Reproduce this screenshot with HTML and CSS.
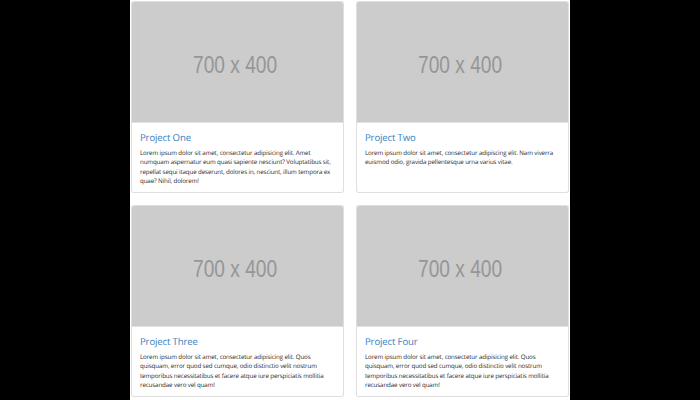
FILE: index.html
```html
<!DOCTYPE html>
<html>
<head>
<meta charset="utf-8">
<link rel="stylesheet" href="styles.css">
</head>
<body>
<div class="page">
  <div class="grid">
    <div class="card">
      <svg class="card-img" viewBox="0 0 700 400"><rect width="700" height="400" fill="#cccccc"/><text x="342" y="235" text-anchor="middle" textLength="279" lengthAdjust="spacingAndGlyphs" class="ph">700 x 400</text></svg>
      <div class="card-body">
        <h4 class="card-title">Project One</h4>
        <p class="card-text">Lorem ipsum dolor sit amet, consectetur adipisicing elit. Amet numquam aspernatur eum quasi sapiente nesciunt? Voluptatibus sit, repellat sequi itaque deserunt, dolores in, nesciunt, illum tempora ex quae? Nihil, dolorem!</p>
      </div>
    </div>
    <div class="card">
      <svg class="card-img" viewBox="0 0 700 400"><rect width="700" height="400" fill="#cccccc"/><text x="342" y="235" text-anchor="middle" textLength="279" lengthAdjust="spacingAndGlyphs" class="ph">700 x 400</text></svg>
      <div class="card-body">
        <h4 class="card-title">Project Two</h4>
        <p class="card-text">Lorem ipsum dolor sit amet, consectetur adipiscing elit. Nam viverra euismod odio, gravida pellentesque urna varius vitae.</p>
      </div>
    </div>
    <div class="card">
      <svg class="card-img" viewBox="0 0 700 400"><rect width="700" height="400" fill="#cccccc"/><text x="342" y="235" text-anchor="middle" textLength="279" lengthAdjust="spacingAndGlyphs" class="ph">700 x 400</text></svg>
      <div class="card-body">
        <h4 class="card-title">Project Three</h4>
        <p class="card-text">Lorem ipsum dolor sit amet, consectetur adipisicing elit. Quos quisquam, error quod sed cumque, odio distinctio velit nostrum temporibus necessitatibus et facere atque iure perspiciatis mollitia recusandae vero vel quam!</p>
      </div>
    </div>
    <div class="card">
      <svg class="card-img" viewBox="0 0 700 400"><rect width="700" height="400" fill="#cccccc"/><text x="342" y="235" text-anchor="middle" textLength="279" lengthAdjust="spacingAndGlyphs" class="ph">700 x 400</text></svg>
      <div class="card-body">
        <h4 class="card-title">Project Four</h4>
        <p class="card-text">Lorem ipsum dolor sit amet, consectetur adipisicing elit. Quos quisquam, error quod sed cumque, odio distinctio velit nostrum temporibus necessitatibus et facere atque iure perspiciatis mollitia recusandae vero vel quam!</p>
      </div>
    </div>
  </div>
</div>
</body>
</html>
```
FILE: styles.css
```css
html, body {
  margin: 0;
  background: #000;
  font-family: "Open Sans", "Noto Sans", sans-serif;
}
.page {
  width: 440px;
  margin: 0 auto;
  background: #fff;
  box-sizing: border-box;
  padding: 1px 1px 0;
  min-height: 400px;
}
.grid {
  display: grid;
  grid-template-columns: 1fr 1fr;
  gap: 12px;
}
.card {
  border: 1px solid rgba(0,0,0,.125);
  border-radius: 3px;
  overflow: hidden;
  display: flex;
  flex-direction: column;
  background: #fff;
}
.card-img {
  display: block;
  width: 100%;
  height: auto;
}
.ph {
  font-family: "Liberation Sans", Arial, sans-serif;
  font-size: 80px;
  fill: #969696;
}
.card-body {
  padding: 9px 8px 6px 8px;
}
.card-title {
  margin: 0 0 4px;
  font-size: 9.6px;
  line-height: 12px;
  letter-spacing: -0.15px;
  font-weight: 400;
  color: #3a7fc1;
  font-family: "Open Sans", sans-serif;
  text-rendering: geometricPrecision;
}
.card-text {
  margin: 0;
  font-family: "Open Sans", sans-serif;
  font-size: 6.2px;
  line-height: 9.6px;
  letter-spacing: -0.12px;
  text-rendering: geometricPrecision;
  color: #2b2b2b;
}
```
